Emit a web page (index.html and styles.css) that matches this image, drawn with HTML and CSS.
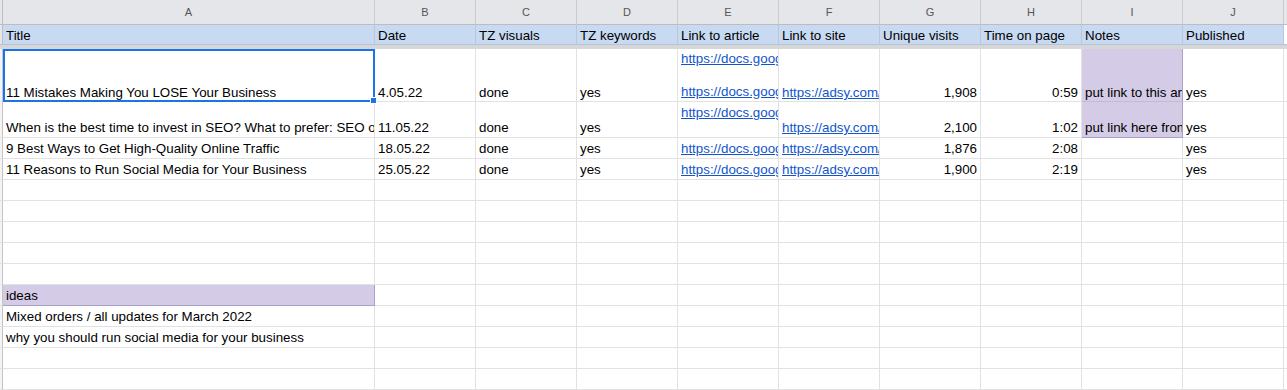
FILE: index.html
```html
<!DOCTYPE html>
<html lang="en">
<head>
<meta charset="utf-8">
<title>Content plan</title>
<link rel="stylesheet" href="styles.css">
</head>
<body>
<div class="sheet">
  <div class="row colhead">
    <div class="stub"></div><div>A</div><div>B</div><div>C</div><div>D</div><div>E</div><div>F</div><div>G</div><div>H</div><div>I</div><div>J</div><div class="edge"></div>
  </div>
  <div class="row hdr">
    <div class="stub"></div><div>Title</div><div>Date</div><div>TZ visuals</div><div>TZ keywords</div><div>Link to article</div><div>Link to site</div><div>Unique visits</div><div>Time on page</div><div>Notes</div><div>Published</div><div class="blank edge"></div>
  </div>
  <div class="freeze"></div>
  <div class="row r2">
    <div class="stub"></div>
    <div class="selcell">11 Mistakes Making You LOSE Your Business<span class="sel"><span class="handle"></span></span></div>
    <div>4.05.22</div><div>done</div><div>yes</div>
    <div><div class="lines wide"><a href="#">https://docs.google.com/document/d/1mK7</a><span>&nbsp;</span><a href="#">https://docs.google.com/document/d/1mK7</a></div></div>
    <div><a href="#">https://adsy.com/blog/11-mistakes</a></div>
    <div class="num">1,908</div><div class="num">0:59</div>
    <div class="purple mid">put link to this article from the blog</div>
    <div>yes</div><div class="edge"></div>
  </div>
  <div class="row r3">
    <div class="stub"></div>
    <div>When is the best time to invest in SEO? What to prefer: SEO or PPC?</div>
    <div>11.05.22</div><div>done</div><div>yes</div>
    <div><div class="lines"><a href="#">https://docs.google.com/document/d/1pQ2</a><span>&nbsp;</span></div></div>
    <div><a href="#">https://adsy.com/blog/best-time-seo</a></div>
    <div class="num">2,100</div><div class="num">1:02</div>
    <div class="purple last">put link here from the first article</div>
    <div>yes</div><div class="edge"></div>
  </div>
  <div class="row">
    <div class="stub"></div>
    <div>9 Best Ways to Get High-Quality Online Traffic</div>
    <div>18.05.22</div><div>done</div><div>yes</div>
    <div><a href="#">https://docs.google.com/document/d/1sT9</a></div>
    <div><a href="#">https://adsy.com/blog/online-traffic</a></div>
    <div class="num">1,876</div><div class="num">2:08</div>
    <div></div><div>yes</div><div class="edge"></div>
  </div>
  <div class="row">
    <div class="stub"></div>
    <div>11 Reasons to Run Social Media for Your Business</div>
    <div>25.05.22</div><div>done</div><div>yes</div>
    <div><a href="#">https://docs.google.com/document/d/1vW4</a></div>
    <div><a href="#">https://adsy.com/blog/social-media</a></div>
    <div class="num">1,900</div><div class="num">2:19</div>
    <div></div><div>yes</div><div class="edge"></div>
  </div>
  <div class="row"><div class="stub"></div><div></div><div></div><div></div><div></div><div></div><div></div><div></div><div></div><div></div><div></div><div class="edge"></div></div>
  <div class="row"><div class="stub"></div><div></div><div></div><div></div><div></div><div></div><div></div><div></div><div></div><div></div><div></div><div class="edge"></div></div>
  <div class="row"><div class="stub"></div><div></div><div></div><div></div><div></div><div></div><div></div><div></div><div></div><div></div><div></div><div class="edge"></div></div>
  <div class="row"><div class="stub"></div><div></div><div></div><div></div><div></div><div></div><div></div><div></div><div></div><div></div><div></div><div class="edge"></div></div>
  <div class="row"><div class="stub"></div><div></div><div></div><div></div><div></div><div></div><div></div><div></div><div></div><div></div><div></div><div class="edge"></div></div>
  <div class="row"><div class="stub"></div><div class="purple last">ideas</div><div></div><div></div><div></div><div></div><div></div><div></div><div></div><div></div><div></div><div class="edge"></div></div>
  <div class="row"><div class="stub"></div><div>Mixed orders / all updates for March 2022</div><div></div><div></div><div></div><div></div><div></div><div></div><div></div><div></div><div></div><div class="edge"></div></div>
  <div class="row"><div class="stub"></div><div>why you should run social media for your business</div><div></div><div></div><div></div><div></div><div></div><div></div><div></div><div></div><div></div><div class="edge"></div></div>
  <div class="row"><div class="stub"></div><div></div><div></div><div></div><div></div><div></div><div></div><div></div><div></div><div></div><div></div><div class="edge"></div></div>
  <div class="row"><div class="stub"></div><div></div><div></div><div></div><div></div><div></div><div></div><div></div><div></div><div></div><div></div><div class="edge"></div></div>
</div>
</body>
</html>
```

FILE: styles.css
```css
html, body {
  margin: 0;
  padding: 0;
  height: 100%;
  overflow: hidden;
  background: #ffffff;
}

body {
  font-family: "Liberation Sans", Arial, sans-serif;
  font-size: 13.33px;
  color: #000000;
}

.sheet {
  width: 1287px;
  overflow: hidden;
}

.row {
  display: grid;
  grid-template-columns: 3px 372px repeat(10, 101px) minmax(0, 1fr);
  height: 21px;
}

.row > div {
  min-width: 0;
  border-right: 1px solid #e2e2e2;
  border-bottom: 1px solid #e2e2e2;
  overflow: hidden;
  white-space: nowrap;
  display: flex;
  align-items: flex-end;
  padding: 0 3px 2px;
  line-height: 15px;
}

.row > .stub,
.row > .edge {
  padding: 0;
}

.row > .stub {
  background: #f4f4f5;
  border-right-color: #c4c4c4;
}

.row.r2 { height: 53px; }
.row.r2 > div { padding-bottom: 1px; }
.row.r3 { height: 36px; }

.colhead {
  height: 25px;
}

.colhead > div {
  background: #e5e6e9;
  border-right-color: #cacbcd;
  border-bottom-color: #bdbdbf;
  justify-content: center;
  align-items: center;
  padding: 0;
  font-size: 11px;
  color: #555555;
}

.colhead > .stub {
  background: #e5e6e9;
  border-right-color: #bdbdbf;
}

.hdr {
  height: 20px;
}

.hdr > div {
  background: #c7daf2;
  border-right-color: #b8c7db;
  border-bottom-color: #b9c3cf;
  padding-bottom: 1px;
}

.hdr > .stub {
  background: #e5e6e9;
  border-right-color: #bdbdbf;
}

.hdr > .blank {
  background: #ffffff;
  border-right-color: #e2e2e2;
}

.freeze {
  height: 4px;
  background: #d5d7db;
}

.num {
  justify-content: flex-end;
}

.row > .purple {
  background: #d4cce6;
  border-right-color: #aaa1c5;
  border-bottom-color: #aaa1c5;
}

.row > .purple.mid {
  border-bottom-color: #c3badb;
}

a {
  color: #1155cc;
  text-decoration: underline;
}

.lines {
  display: flex;
  flex-direction: column;
}

.lines.wide {
  line-height: 16.5px;
}

.selcell {
  position: relative;
  overflow: visible !important;
}

.row > .selcell {
  overflow: visible;
}

.sel {
  position: absolute;
  top: 0;
  left: 0;
  right: -1px;
  bottom: -1px;
  border: 2px solid #1a73e8;
  z-index: 2;
}

.handle {
  position: absolute;
  right: -4px;
  bottom: -4px;
  width: 7px;
  height: 7px;
  background: #1a73e8;
  border: 1px solid #ffffff;
  box-sizing: border-box;
}
```
